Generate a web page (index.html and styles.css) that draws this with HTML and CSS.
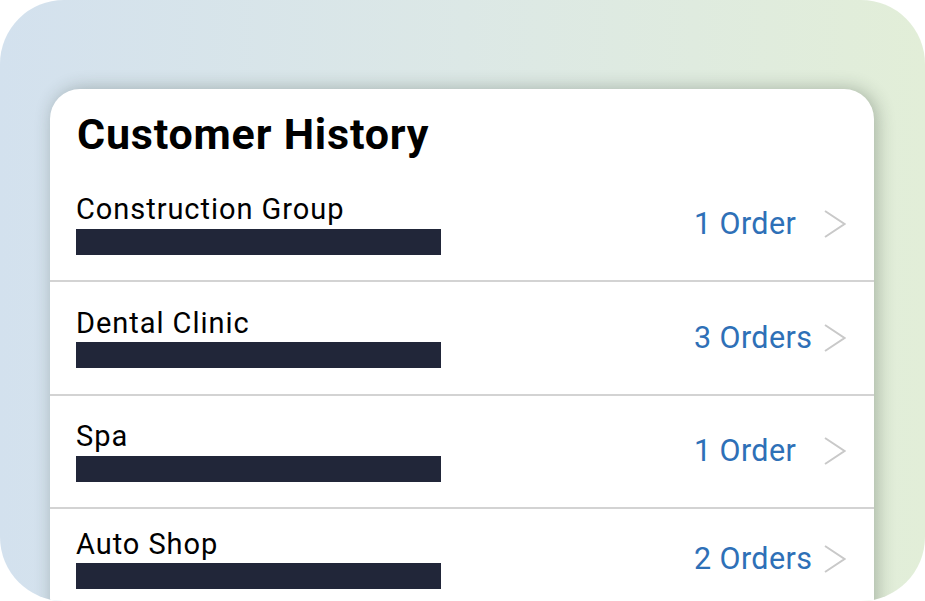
FILE: index.html
```html
<!DOCTYPE html>
<html lang="en">
<head>
<meta charset="utf-8">
<title>Customer History</title>
<link rel="stylesheet" href="styles.css">
</head>
<body>
<div class="frame">
  <div class="card">
    <h1 class="title">Customer History</h1>
    <div class="row">
      <div class="info">
        <div class="name">Construction Group</div>
        <div class="bar"></div>
      </div>
      <div class="meta">
        <span class="orders">1 Order</span>
        <svg class="chev" viewBox="0 0 22 28" width="22" height="28"><polyline points="1,1 20.5,14 1,27"/></svg>
      </div>
    </div>
    <div class="row">
      <div class="info">
        <div class="name">Dental Clinic</div>
        <div class="bar"></div>
      </div>
      <div class="meta">
        <span class="orders">3 Orders</span>
        <svg class="chev" viewBox="0 0 22 28" width="22" height="28"><polyline points="1,1 20.5,14 1,27"/></svg>
      </div>
    </div>
    <div class="row">
      <div class="info">
        <div class="name">Spa</div>
        <div class="bar"></div>
      </div>
      <div class="meta">
        <span class="orders">1 Order</span>
        <svg class="chev" viewBox="0 0 22 28" width="22" height="28"><polyline points="1,1 20.5,14 1,27"/></svg>
      </div>
    </div>
    <div class="row row-last">
      <div class="info">
        <div class="name">Auto Shop</div>
        <div class="bar"></div>
      </div>
      <div class="meta">
        <span class="orders">2 Orders</span>
        <svg class="chev" viewBox="0 0 22 28" width="22" height="28"><polyline points="1,1 20.5,14 1,27"/></svg>
      </div>
    </div>
  </div>
</div>
</body>
</html>
```

FILE: styles.css
```css
html, body {
  margin: 0;
  padding: 0;
  background: #ffffff;
}

body {
  width: 925px;
  height: 601px;
  overflow: hidden;
  font-family: Roboto, "Liberation Sans", Arial, sans-serif;
}

.frame {
  box-sizing: border-box;
  width: 925px;
  height: 601px;
  border-radius: 64px;
  background: linear-gradient(90deg, #d3e1ee 0%, #dce8e6 50%, #e2eed8 100%);
  padding: 89px 51px 0 50px;
  overflow: hidden;
}

.card {
  background: #ffffff;
  border-radius: 30px;
  height: 560px;
  box-shadow: 3px 0 18px rgba(40, 55, 45, 0.32);
  overflow: hidden;
}

.title {
  margin: 0;
  padding: 23.5px 0 0 27px;
  height: 56px;
  font-size: 43px;
  line-height: 43px;
  font-weight: 700;
  color: #000000;
  letter-spacing: 0.8px;
  white-space: nowrap;
}

.row {
  box-sizing: border-box;
  height: 113.5px;
  display: flex;
  align-items: flex-start;
  justify-content: space-between;
  padding: 26.5px 28px 0 26px;
  border-bottom: 2px solid #d3d3d3;
}

.row-last {
  padding-top: 20.5px;
  border-bottom: 0;
}

.info {
  display: flex;
  flex-direction: column;
}

.name {
  font-size: 29px;
  line-height: 29px;
  color: #000000;
  letter-spacing: 0.95px;
  white-space: nowrap;
}

.bar {
  margin-top: 4.5px;
  width: 365px;
  height: 26px;
  background: #212639;
}

.meta {
  margin-top: 14px;
  height: 30px;
  display: flex;
  align-items: center;
  gap: 13px;
}

.orders {
  width: 117px;
  margin-left: -1px;
  font-size: 30.5px;
  line-height: 30px;
  color: #2e70b7;
  letter-spacing: 0.4px;
  white-space: nowrap;
}

.chev {
  display: block;
  fill: none;
  stroke: #c9c9c9;
  stroke-width: 2;
}
```
